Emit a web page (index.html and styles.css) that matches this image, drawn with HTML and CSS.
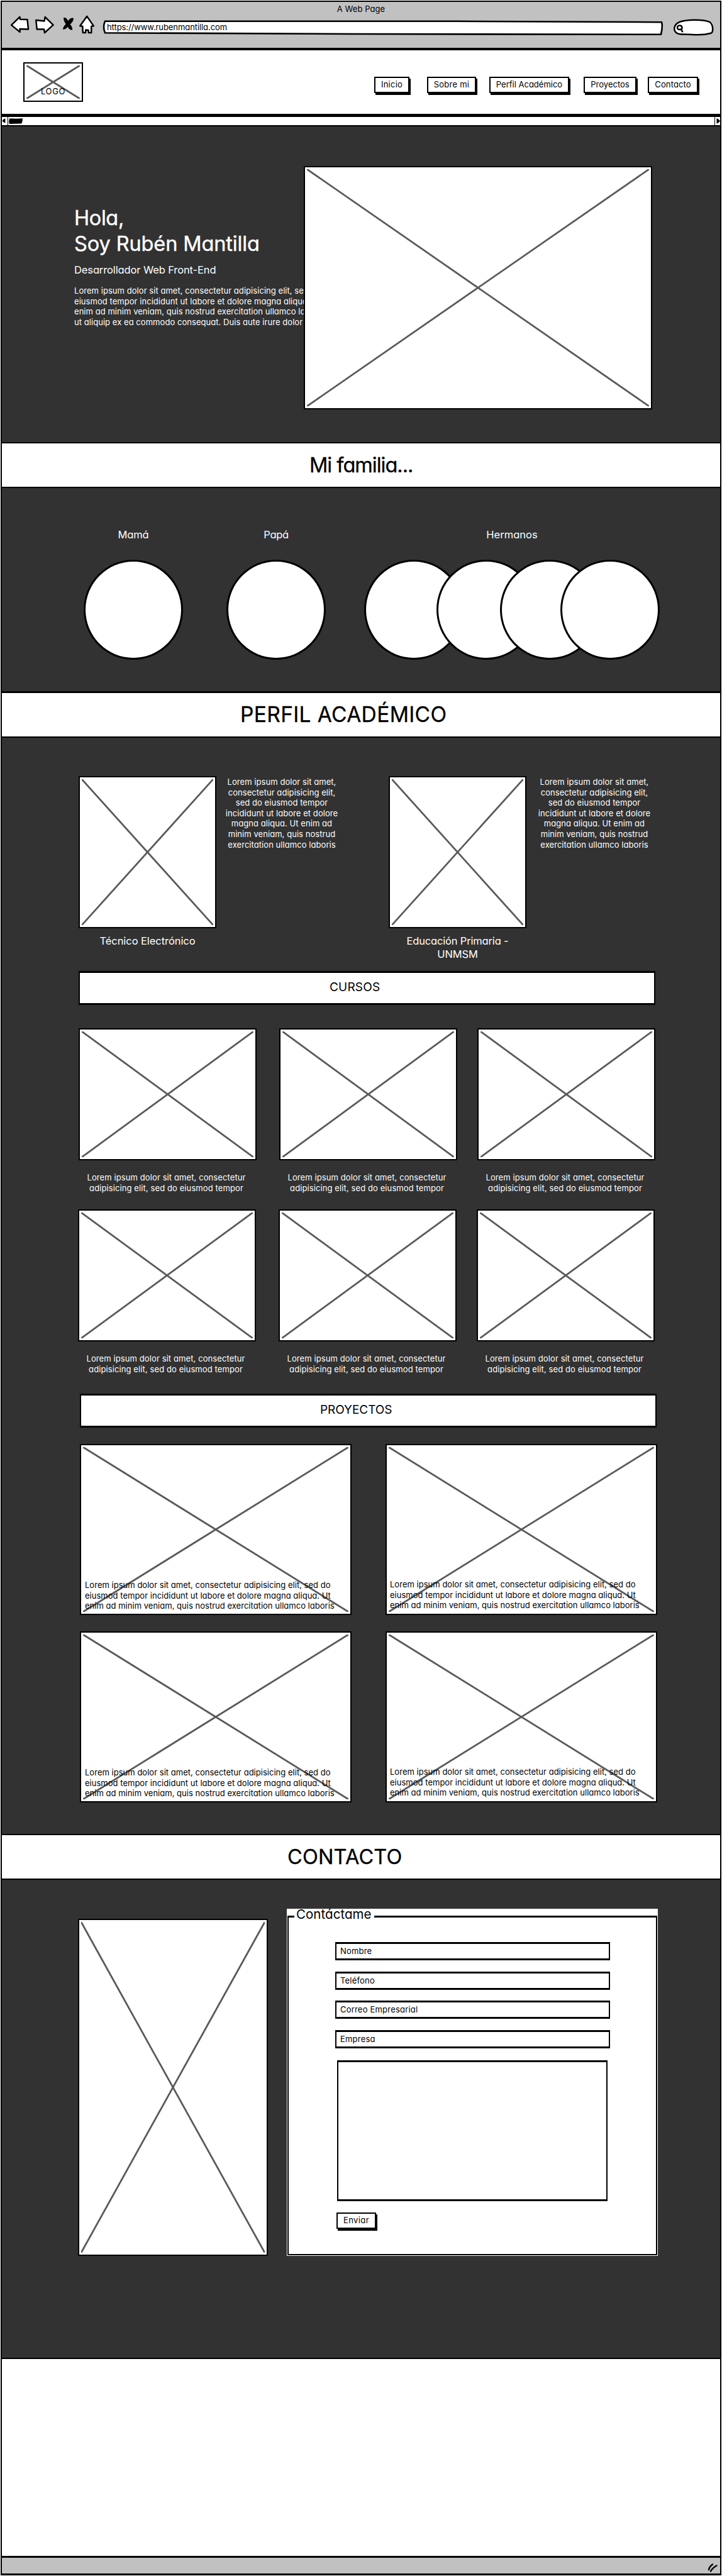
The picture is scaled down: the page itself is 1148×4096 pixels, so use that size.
FILE: index.html
```html
<!DOCTYPE html>
<html lang="es">
<head>
<meta charset="utf-8">
<title>Rubén Mantilla</title>
<link rel="stylesheet" href="styles.css">
</head>
<body>
<svg class="defs" aria-hidden="true">
  <symbol id="cross"><line x1="0" y1="0" x2="100%" y2="100%"/><line x1="100%" y1="0" x2="0" y2="100%"/></symbol>
</svg>
<div class="window">
  <div class="chrome">
    <div class="chrome-title">A Web Page</div>
    <div class="toolbar">
      <svg class="icon back" viewBox="90 64 175 203"><path d="M102 165 177 92 181 113 245 115 254 202 178 200 178 227Z"/></svg>
      <svg class="icon forward" viewBox="312 64 182 203"><path d="M325 120 400 128 407 92 480 163 403 235 398 203 333 203Z"/></svg>
      <svg class="icon stop" viewBox="558 64 106 203"><path d="M570 97C590 95 605 115 610 128 620 110 640 98 658 102 660 125 645 145 628 157 640 172 650 190 648 209 630 212 612 195 605 180 598 195 580 206 564 203 563 185 578 165 590 155 575 140 567 115 570 97Z"/></svg>
      <svg class="icon home" viewBox="706 64 146 203"><path d="M780 86 840 172 820 175 820 233 795 233 793 210 770 208 768 233 744 233 741 175 718 172Z"/></svg>
      <div class="address">
        <svg class="address-frame" viewBox="0 0 892 36"><path d="M4 11.8 560 11.8 889 13.2Q891 20 888 32.8L400 32 4 30.3Q0 21 4 11.8Z"/></svg>
        <span>https://www.rubenmantilla.com</span>
      </div>
      <svg class="icon search" viewBox="100 4 365 203"><path d="M180 187C130 188 105 160 113 125 125 75 180 62 290 59 350 58 400 65 430 78 452 95 457 130 455 155 452 170 445 176 440 177 400 188 350 193 300 191 250 188 210 187 180 187Z"/><path d="M160 108C145 107 137 118 139 130 140 142 150 146 162 144 176 145 182 138 181 127 180 113 172 108 160 108ZM170 142 185 163"/></svg>
    </div>
  </div>

  <header class="site-header">
    <div class="picture logo"><svg class="cross"><use href="#cross"/></svg><span>LOGO</span></div>
    <nav class="menu">
      <a class="button inicio">Inicio</a>
      <a class="button sobre">Sobre mi</a>
      <a class="button perfil">Perfil Académico</a>
      <a class="button proyectos">Proyectos</a>
      <a class="button contacto">Contacto</a>
    </nav>
  </header>

  <div class="scrollbar">
    <svg class="scroll-left" viewBox="0 0 10 13"><path d="M6 2V10Q2 9 .6 6 2 3 6 2Z"/></svg>
    <svg class="thumb" viewBox="0 0 22 9"><path d="M1.500.3Q11 1.200 22 .3 22 5 20.300 8.500L1 9Q-.8 4 1.500.3Z"/></svg>
    <svg class="scroll-right" viewBox="0 0 8 13"><path d="M2.500 2Q6 3 8 6.500 6 9.500 2.500 10.500Z"/></svg>
  </div>

  <section class="hero">
    <div class="hero-copy">
      <h1><span class="greeting">Hola,</span><br>Soy Rubén Mantilla</h1>
      <h2>Desarrollador Web Front-End</h2>
      <p>Lorem ipsum dolor sit amet, consectetur adipisicing elit, sed do<br>eiusmod tempor incididunt ut labore et dolore magna aliqua. Ut<br>enim ad minim veniam, quis nostrud exercitation ullamco laboris<br>ut aliquip ex ea commodo consequat. Duis aute irure dolor</p>
    </div>
    <div class="picture hero-picture"><svg class="cross"><use href="#cross"/></svg></div>
  </section>

  <div class="band band-family">Mi familia...</div>

  <section class="family">
    <div class="relatives mother"><div class="label">Mamá</div><div class="circles"><i></i></div></div>
    <div class="relatives father"><div class="label">Papá</div><div class="circles"><i></i></div></div>
    <div class="relatives siblings"><div class="label">Hermanos</div><div class="circles"><i></i><i></i><i></i><i></i></div></div>
  </section>

  <div class="band band-profile">PERFIL ACADÉMICO</div>

  <section class="profile">
    <div class="studies">
      <div class="picture"><svg class="cross"><use href="#cross"/></svg></div>
      <p>Lorem ipsum dolor sit amet,<br>consectetur adipisicing elit,<br>sed do eiusmod tempor<br>incididunt ut labore et dolore<br>magna aliqua. Ut enim ad<br>minim veniam, quis nostrud<br>exercitation ullamco laboris</p>
      <div class="picture second"><svg class="cross"><use href="#cross"/></svg></div>
      <p>Lorem ipsum dolor sit amet,<br>consectetur adipisicing elit,<br>sed do eiusmod tempor<br>incididunt ut labore et dolore<br>magna aliqua. Ut enim ad<br>minim veniam, quis nostrud<br>exercitation ullamco laboris</p>
      <h3>Técnico Electrónico</h3>
      <h3 class="second">Educación Primaria -<br>UNMSM</h3>
    </div>

    <div class="bar bar-courses">CURSOS</div>
    <div class="courses">
      <div><div class="picture"><svg class="cross"><use href="#cross"/></svg></div><p>Lorem ipsum dolor sit amet, consectetur<br>adipisicing elit, sed do eiusmod tempor</p></div>
      <div><div class="picture"><svg class="cross"><use href="#cross"/></svg></div><p>Lorem ipsum dolor sit amet, consectetur<br>adipisicing elit, sed do eiusmod tempor</p></div>
      <div><div class="picture"><svg class="cross"><use href="#cross"/></svg></div><p>Lorem ipsum dolor sit amet, consectetur<br>adipisicing elit, sed do eiusmod tempor</p></div>
    </div>
    <div class="courses courses-more">
      <div><div class="picture"><svg class="cross"><use href="#cross"/></svg></div><p>Lorem ipsum dolor sit amet, consectetur<br>adipisicing elit, sed do eiusmod tempor</p></div>
      <div><div class="picture"><svg class="cross"><use href="#cross"/></svg></div><p>Lorem ipsum dolor sit amet, consectetur<br>adipisicing elit, sed do eiusmod tempor</p></div>
      <div><div class="picture"><svg class="cross"><use href="#cross"/></svg></div><p>Lorem ipsum dolor sit amet, consectetur<br>adipisicing elit, sed do eiusmod tempor</p></div>
    </div>

    <div class="bar bar-projects">PROYECTOS</div>
    <div class="projects">
      <div class="picture"><svg class="cross"><use href="#cross"/></svg><p>Lorem ipsum dolor sit amet, consectetur adipisicing elit, sed do<br>eiusmod tempor incididunt ut labore et dolore magna aliqua. Ut<br>enim ad minim veniam, quis nostrud exercitation ullamco laboris</p></div>
      <div class="picture"><svg class="cross"><use href="#cross"/></svg><p>Lorem ipsum dolor sit amet, consectetur adipisicing elit, sed do<br>eiusmod tempor incididunt ut labore et dolore magna aliqua. Ut<br>enim ad minim veniam, quis nostrud exercitation ullamco laboris</p></div>
      <div class="picture"><svg class="cross"><use href="#cross"/></svg><p>Lorem ipsum dolor sit amet, consectetur adipisicing elit, sed do<br>eiusmod tempor incididunt ut labore et dolore magna aliqua. Ut<br>enim ad minim veniam, quis nostrud exercitation ullamco laboris</p></div>
      <div class="picture"><svg class="cross"><use href="#cross"/></svg><p>Lorem ipsum dolor sit amet, consectetur adipisicing elit, sed do<br>eiusmod tempor incididunt ut labore et dolore magna aliqua. Ut<br>enim ad minim veniam, quis nostrud exercitation ullamco laboris</p></div>
    </div>
  </section>

  <div class="band band-contact">CONTACTO</div>

  <section class="contact">
    <div class="picture contact-picture"><svg class="cross"><use href="#cross"/></svg></div>
    <form class="contact-form">
      <fieldset>
        <legend>Contáctame</legend>
        <div class="fields">
          <div class="field">Nombre</div>
          <div class="field">Teléfono</div>
          <div class="field">Correo Empresarial</div>
          <div class="field">Empresa</div>
          <div class="message"></div>
          <a class="button send">Enviar</a>
        </div>
      </fieldset>
    </form>
  </section>

  <div class="blank"></div>
  <footer class="status">
    <svg class="grip" viewBox="0 0 17 14"><path d="M8 1.500Q3 5 2 10M14.500 3.500Q8 7 5 12.500"/></svg>
  </footer>
</div>
</body>
</html>
```
FILE: styles.css
```css
* { box-sizing: border-box; }

body {
  margin: 0;
  background: #fff;
  color: #000;
  font-family: Inter, "Noto Sans", sans-serif;
  font-feature-settings: "cv11";
  font-size: 13px;
  line-height: 16px;
  white-space: nowrap;
}

h1, h2, h3, p, fieldset, legend { margin: 0; padding: 0; font-weight: 400; }

.defs { display: block; width: 0; height: 0; position: absolute; }

.window {
  height: 4094px;
  margin: 1px 1px 0;
  border: 2px solid #000;
  border-bottom-width: 3px;
  display: flex;
  flex-direction: column;
}

/* Image placeholder with a crossed frame */
.picture {
  position: relative;
  border: 2px solid #000;
  background: #fff;
}
.cross {
  position: absolute;
  top: 3px;
  left: 3px;
  width: calc(100% - 6px);
  height: calc(100% - 6px);
  overflow: visible;
  stroke: #5a5a5a;
  stroke-width: 2.8;
}

.button {
  display: block;
  height: 26px;
  border: 2px solid #000;
  background: #fff;
  box-shadow: 2px 3px 0 #000;
  line-height: 21px;
  text-align: center;
}

/* Browser chrome */
.chrome { height: 77px; background: #c1c1c1; border-bottom: 4px solid #000; }
.chrome-title { height: 19px; padding-top: 3px; text-align: center; letter-spacing: 0.08px; }
.toolbar { display: flex; height: 36px; padding-left: 13px; }
.icon { height: 36px; flex: none; fill: #fff; stroke: #000; stroke-width: 14; stroke-linejoin: round; stroke-linecap: round; }
.back { width: 31px; }
.forward { width: 32px; margin-left: 8px; }
.stop { width: 19px; margin-left: 12px; fill: #000; stroke: none; }
.home { width: 26px; margin-left: 7px; }
.address { position: relative; width: 892px; margin-left: 12px; padding: 13px 0 0 7px; letter-spacing: -0.08px; }
.address-frame { position: absolute; top: 0; left: 0; width: 892px; height: 36px; fill: #fff; stroke: #000; stroke-width: 2.6; }
.address span { position: relative; }
.search { width: 65px; margin-left: 15px; }

.site-header { display: flex; justify-content: space-between; height: 106px; padding: 19px 35px 0 34px; border-bottom: 5px solid #000; }
.logo { width: 95px; height: 63px; display: flex; justify-content: center; align-items: flex-end; padding-bottom: 7px; letter-spacing: 0.6px; }
.logo span { position: relative; }
.menu { display: flex; padding-top: 23px; }
.inicio { width: 56px; letter-spacing: 0.24px; }
.sobre { width: 78px; margin-left: 28px; letter-spacing: 0.25px; }
.perfil { width: 127px; margin-left: 21px; }
.proyectos { width: 84px; margin-left: 23px; }
.contacto { width: 80px; margin-left: 18px; letter-spacing: 0.12px; }

.scrollbar { display: flex; height: 15px; border-bottom: 2px solid #000; }
.scroll-left { width: 10px; height: 13px; border-right: 1px solid #000; }
.thumb { width: 22px; height: 9px; margin: 2px 0 0 1px; }
.scroll-right { width: 9px; height: 13px; margin-left: auto; border-left: 1px solid #000; }

.hero { display: flex; height: 502px; padding-left: 115px; background: #323232; color: #fff; }
.hero-copy { width: 365px; padding-top: 125px; }
.hero h1 { font-size: 32.5px; line-height: 41px; letter-spacing: -0.12px; -webkit-text-stroke: 0.4px #fff; }
.greeting { letter-spacing: -0.38px; }
.hero h2 { margin-top: 11px; font-size: 16.5px; line-height: 21px; letter-spacing: -0.12px; }
.hero p { margin-top: 14px; line-height: 16.5px; letter-spacing: 0.05px; }
.hero-picture { width: 554px; height: 387px; margin-top: 63px; }

.band { height: 73px; padding-top: 14px; border: solid #000; border-width: 2px 0; font-size: 32.5px; line-height: 41px; -webkit-text-stroke: 0.3px #000; }
.band-family { padding-left: 489px; letter-spacing: -1px; }
.band-profile { height: 74px; border-top-width: 3px; padding-left: 379px; font-size: 33.5px; letter-spacing: 0.35px; }
.band-contact { padding-left: 454px; letter-spacing: 0.16px; }

.family { display: flex; height: 323px; padding: 64px 0 0 130px; background: #323232; color: #fff; }
.mother { letter-spacing: -0.17px; }
.father { margin-left: 69px; letter-spacing: -0.37px; }
.siblings { margin-left: 61px; }
.label { margin-bottom: 29px; font-size: 16.5px; line-height: 21px; text-align: center; }
.circles { display: flex; }
.circles i { width: 158px; height: 159px; border: 3px solid #000; border-radius: 50%; background: #fff; }
.circles i:nth-child(2) { margin-left: -43px; }
.circles i:nth-child(3) { margin-left: -57px; }
.circles i:nth-child(4) { margin-left: -62px; }

.profile { height: 1743px; padding: 61px 0 0 122px; background: #323232; color: #fff; }
.studies { display: grid; grid-template-columns: 219px 208px 66px 219px 216px; grid-template-rows: 242px 42px; row-gap: 10px; text-align: center; }
.studies .second { grid-column: 4; }
.studies p { padding-top: 1px; line-height: 16.6px; letter-spacing: 0.06px; }
.studies h3 { font-size: 16.5px; line-height: 21px; letter-spacing: -0.07px; }
.studies h3.second { letter-spacing: -0.17px; }

.bar { width: 917px; height: 54px; border: 2px solid #000; border-width: 3px 2px; background: #fff; color: #000; font-size: 19px; line-height: 21px; padding-top: 12px; }
.bar-courses { margin-top: 16px; padding-left: 397px; letter-spacing: 0.2px; }
.bar-projects { margin: 30px 0 0 2px; padding-left: 380px; letter-spacing: -0.05px; }

.courses { display: grid; grid-template-columns: 283px 283px 283px; column-gap: 36px; margin-top: 37px; }
.courses > :last-child { margin-left: -4px; margin-right: 4px; }
.courses .picture { height: 210px; }
.courses p { margin-top: 19px; padding-right: 4px; line-height: 17px; letter-spacing: 0.1px; text-align: center; }
.courses-more { margin: 25px 0 0 -1px; }

.projects { display: grid; grid-template-columns: 432px 432px; gap: 26px 54px; margin: 26px 0 0 2px; color: #000; }
.projects .picture { height: 272px; display: flex; flex-direction: column; justify-content: flex-end; padding: 0 0 4px 6px; }
.projects .picture:nth-child(even) { padding: 0 0 5px 5px; }
.projects p { position: relative; line-height: 16.6px; letter-spacing: 0.02px; }

.contact { display: flex; align-items: flex-start; height: 760px; padding: 46px 0 0 121px; background: #323232; }
.contact-picture { width: 302px; height: 536px; margin-top: 16px; }
.contact-form { width: 590px; height: 552px; margin-left: 30px; background: #fff; padding: 0 1px 1px; }
fieldset { height: 551px; border: 2px solid #000; border-top-width: 3px; min-width: 0; }
legend { margin-left: 9px; padding: 0 4px 7px 3px; font-size: 20.5px; line-height: 17px; letter-spacing: 0.05px; }
.fields { padding: 29px 0 0 74px; letter-spacing: 0.2px; }
.field { width: 437px; height: 29px; margin-bottom: 17.6px; border: 3px solid #000; border-width: 3px 2px; padding: 3px 0 0 6px; }
.message { width: 430px; height: 224px; margin: 19px 0 0 3px; border: 2px solid #000; border-width: 3px 2px; }
.send { width: 63px; height: 26px; margin: 18px 0 0 2px; letter-spacing: 0.4px; }

.blank { height: 315px; border-top: 2px solid #000; }
.status { flex: 1; display: flex; justify-content: flex-end; padding: 9px 3px 0 0; border-top: 3px solid #000; background: #c1c1c1; }
.grip { width: 17px; height: 14px; fill: none; stroke: #000; stroke-width: 2.5; stroke-linecap: round; }
```
